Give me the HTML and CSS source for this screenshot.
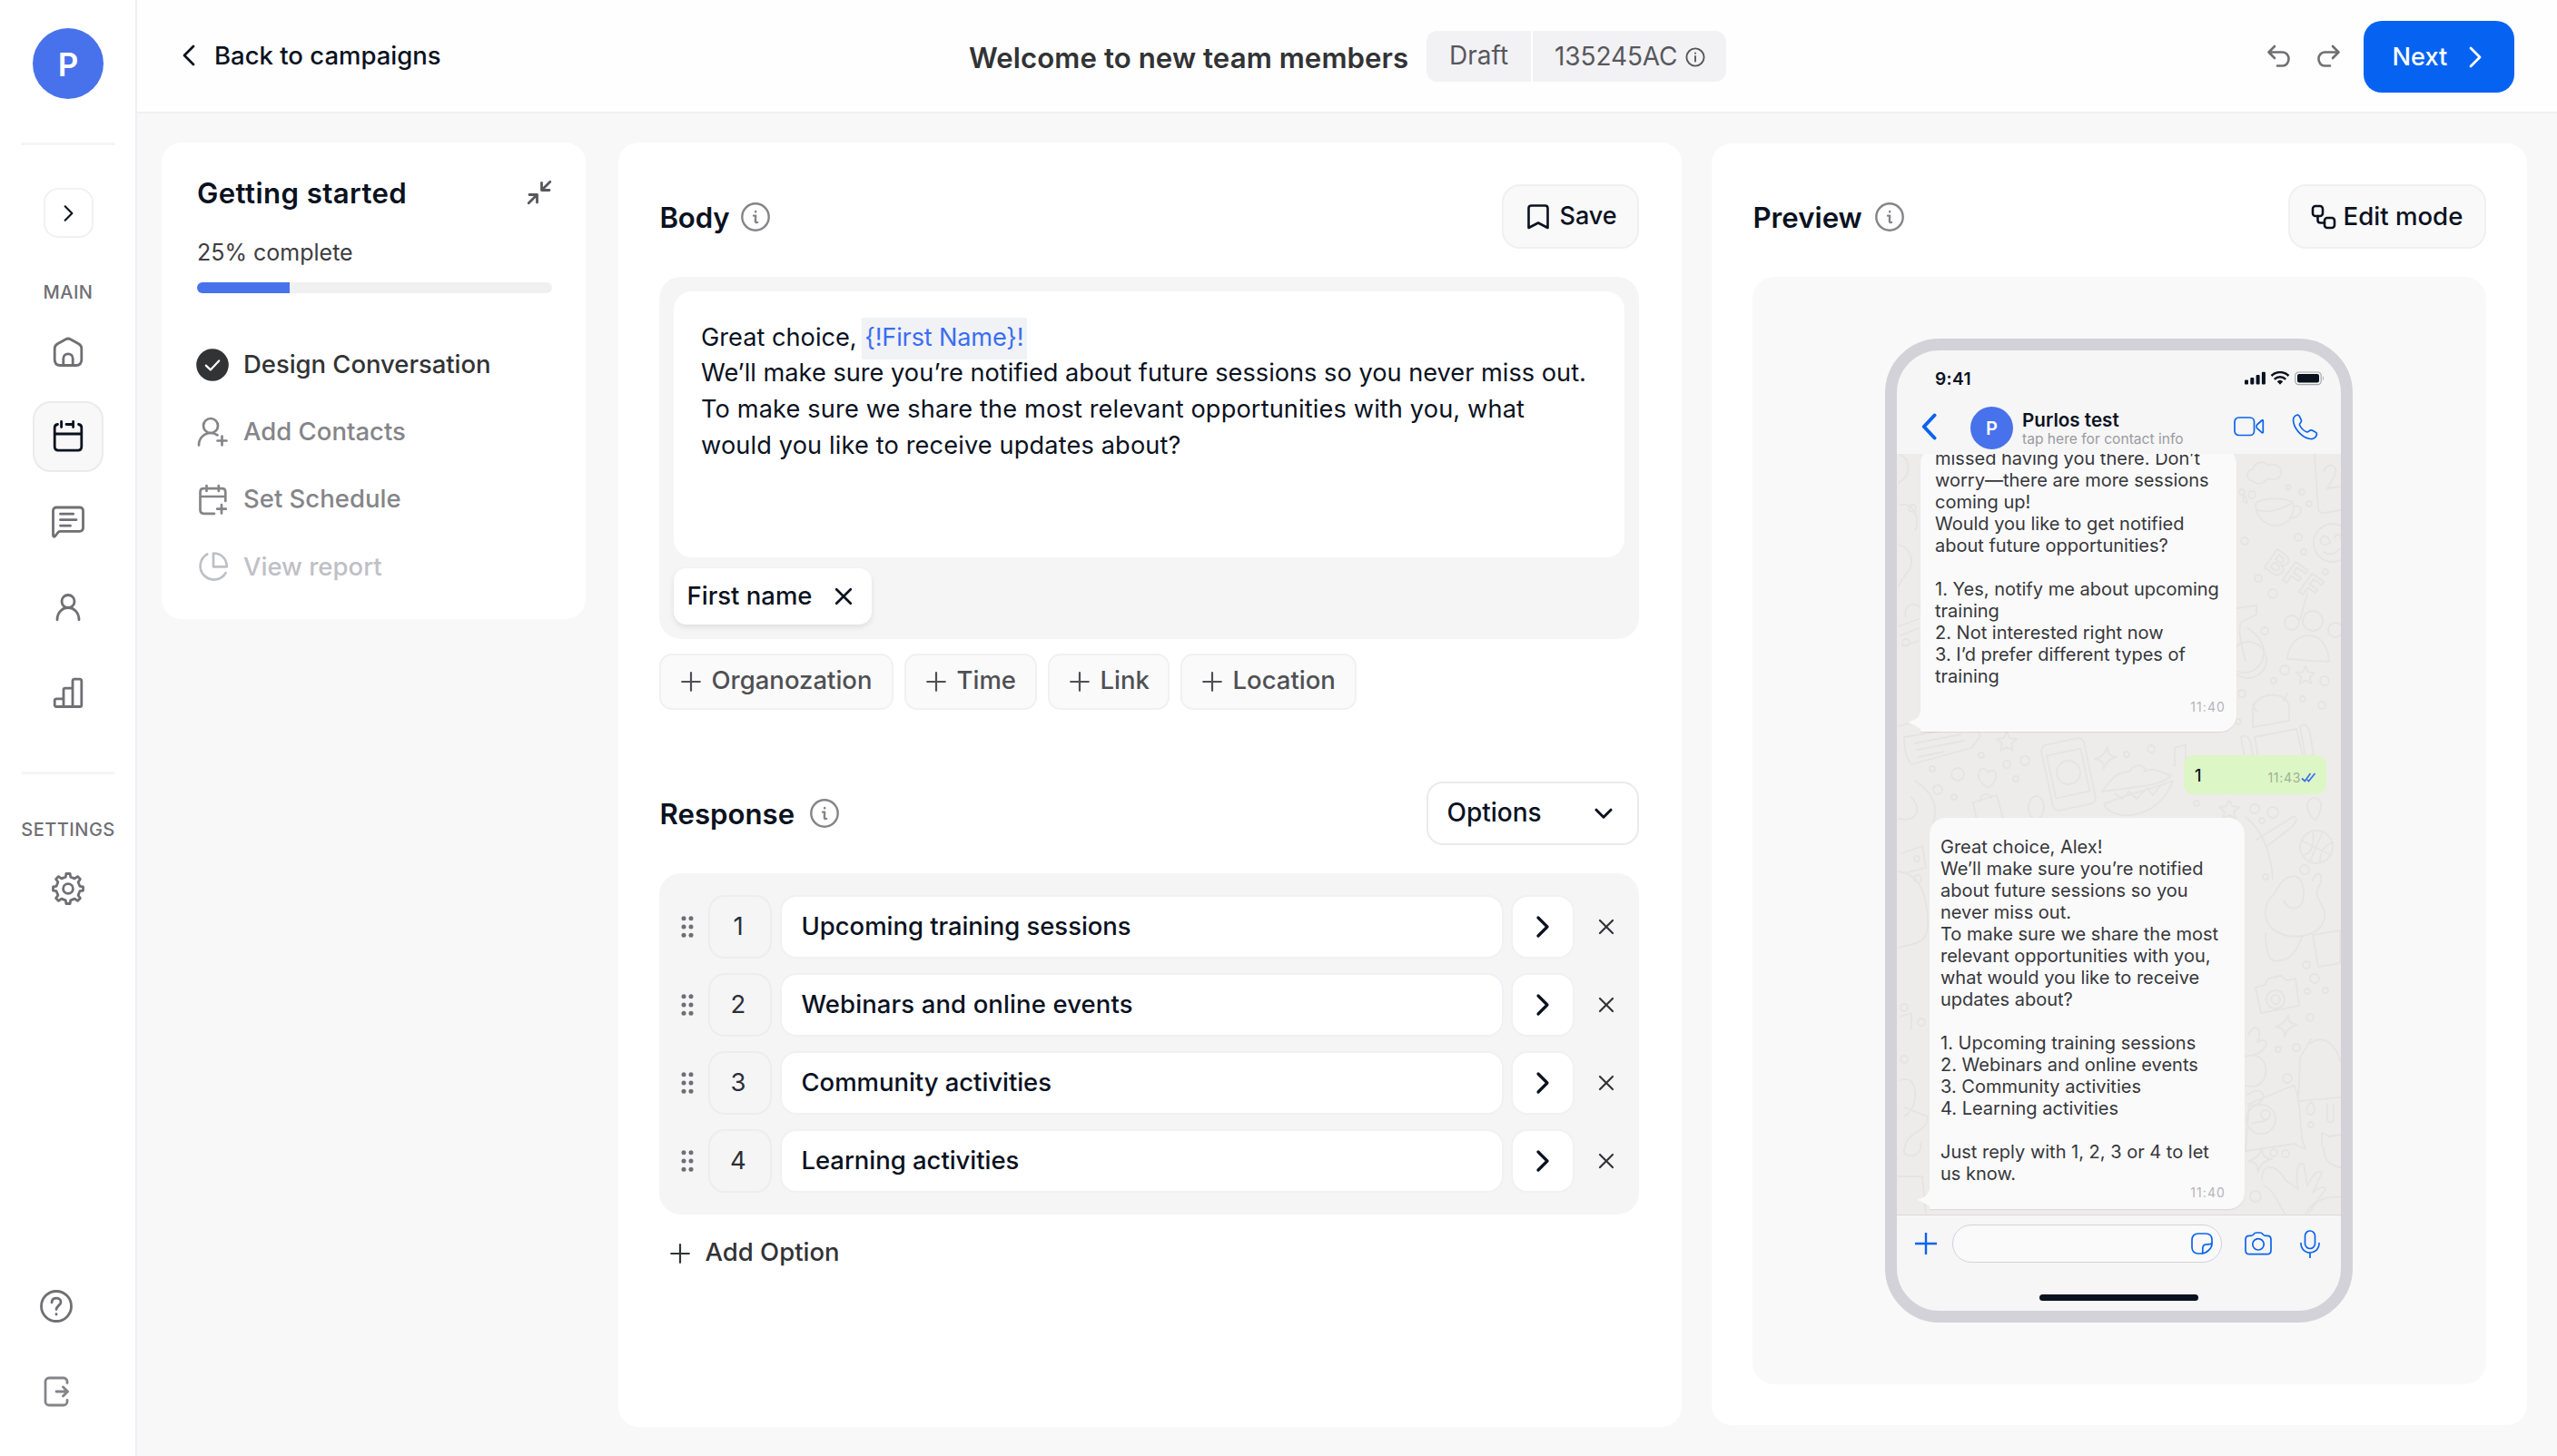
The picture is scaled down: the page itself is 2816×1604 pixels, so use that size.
FILE: index.html
```html
<!DOCTYPE html>
<html lang="en">
<head>
<meta charset="utf-8">
<title>Welcome to new team members</title>
<link rel="stylesheet" href="styles.css">
</head>
<body>
<svg class="defs" width="0" height="0" aria-hidden="true">
  <symbol id="chev-r" viewBox="0 0 16 26"><path d="M3 3l10 10L3 23"/></symbol>
  <symbol id="chev-l" viewBox="0 0 16 26"><path d="M13 3L3 13l10 10"/></symbol>
  <symbol id="plus" viewBox="0 0 22 22"><path d="M11 1.2v19.6M1.2 11h19.6"/></symbol>
  <symbol id="cross" viewBox="0 0 20 20"><path d="M2.2 2.2l15.6 15.6M17.8 2.2L2.2 17.8"/></symbol>
  <symbol id="info" viewBox="0 0 32 32"><circle cx="16" cy="16" r="14.7"/><path d="M14 14.6h2.2l-.3 6.2c0 1 .7 1.3 2.2 1.1M16.2 10v.4"/></symbol>
  <symbol id="grip" viewBox="0 0 14 24"><g fill="#6f6f73" stroke="none"><circle cx="3" cy="2.8" r="2.5"/><circle cx="11" cy="2.8" r="2.5"/><circle cx="3" cy="12" r="2.5"/><circle cx="11" cy="12" r="2.5"/><circle cx="3" cy="21.2" r="2.5"/><circle cx="11" cy="21.2" r="2.5"/></g></symbol>
  <symbol id="star" viewBox="-12 -12 24 24"><path d="M0-10l3 6.4 7 .8-5.200 4.800L6.200 9 0 5.500-6.200 9l1.400-7L-10-2.800l7-.8z"/></symbol>
  <symbol id="spark" viewBox="-12 -12 24 24"><path d="M2-11C2-4 4-2 11-1 4 1 1 3-2 11-2 4-4 2-11 1-4-1-1-4 2-11z"/></symbol>
</svg>

<div class="app">
  <nav class="sidebar">
    <div class="logo">P</div>
    <hr class="rule">
    <button class="expand"><svg class="ic" width="13" height="20" stroke-width="3.200"><use href="#chev-r"/></svg></button>
    <div class="nav-label">MAIN</div>
    <div class="nav">
      <a class="nav-item"><svg class="ic" width="40" height="40" viewBox="0 0 40 40"><path d="M20 5c1 0 1.800.3 2.600.8l9 5c2.100 1.200 3.200 3 3.200 5.300V28c0 4-2.200 6.500-6 6.500H11.200c-3.800 0-6-2.500-6-6.500V16.100c0-2.300 1.100-4.100 3.200-5.300l9-5C18.200 5.300 19 5 20 5z"/><path d="M14.800 34v-7a5.200 5.200 0 0 1 10.400 0v7"/></svg></a>
      <a class="nav-item active"><svg class="ic" width="40" height="40" viewBox="0 0 40 40"><path d="M5.200 17h29.600M8.500 6.500C6.300 6.800 5.200 8 5.200 10v21c0 2.800 1.400 4.200 4.200 4.200h21.200c2.800 0 4.200-1.400 4.200-4.200V10c0-2-1.100-3.200-3.300-3.500M12.600 3.400v6.200M25.600 3.400v6.200M18 6.500h7"/></svg></a>
      <a class="nav-item"><svg class="ic" width="40" height="40" viewBox="0 0 40 40"><path d="M3.500 34.500V7.500a3.500 3.500 0 0 1 3.500-3.500h26A3.500 3.500 0 0 1 36.500 7.500v19.300A3.500 3.500 0 0 1 33 30.300H11.500c-1 0-1.700.3-2.400 1L5.600 35.700c-1 1-2.100.4-2.100-1.200zM11.500 11.200h14.200M11.500 17.700h17.500M11.500 24.200h11"/></svg></a>
      <a class="nav-item"><svg class="ic" width="40" height="40" viewBox="0 0 40 40"><circle cx="20" cy="13.500" r="7"/><path d="M8 33.800c0-7.500 5-13.300 12-13.300s12 5.800 12 13.300"/></svg></a>
      <a class="nav-item"><svg class="ic" width="40" height="40" viewBox="0 0 40 40"><path d="M15 35.500H7A1.800 1.800 0 0 1 5.200 33.700v-5A1.800 1.800 0 0 1 7 26.900h8M15 35.500V17a1.800 1.800 0 0 1 1.800-1.800H25M25 35.500V7a1.800 1.800 0 0 1 1.800-1.800H33A1.800 1.800 0 0 1 34.800 7v26.700a1.800 1.800 0 0 1-1.800 1.800H15"/></svg></a>
    </div>
    <hr class="rule rule-2">
    <div class="nav-label settings">SETTINGS</div>
    <a class="nav-item"><svg class="ic" width="40" height="40" viewBox="0 0 40 40"><path d="M17.900 3.500h4.200l.6 3.600 4.500 1.800 3.300-2.300 2.900 2.900-2.300 3.300 1.800 4.500 3.600.6v4.200l-3.600.6-1.800 4.500 2.300 3.300-2.900 2.900-3.300-2.300-4.500 1.800-.6 3.600h-4.200l-.6-3.600-4.500-1.800-3.300 2.300-2.900-2.900 2.300-3.300-1.800-4.500-3.600-.6v-4.200l3.600-.6 1.800-4.500-2.300-3.300 2.900-2.900 3.300 2.300 4.500-1.800z"/><circle cx="20" cy="20" r="5.400"/></svg></a>
    <div class="nav nav-foot">
      <a class="nav-item"><svg class="ic" width="40" height="40" viewBox="0 0 40 40"><circle cx="20" cy="20" r="16.500"/><path d="M15 15.800c.2-2.900 2.200-4.600 5.100-4.600 2.800 0 4.900 1.700 4.900 4.200 0 3.700-5 4.300-5 8.200M20 28.600v.5"/></svg></a>
      <a class="nav-item"><svg class="ic light" width="40" height="40" viewBox="0 0 40 40"><path d="M32 10.500V9a4 4 0 0 0-4-4H12a4 4 0 0 0-4 4v22a4 4 0 0 0 4 4h16a4 4 0 0 0 4-4v-1.500M20 20h12.500M27.500 15l5 5-5 5"/></svg></a>
    </div>
  </nav>

  <div class="main">
    <header class="topbar">
      <a class="back"><svg class="ic" width="16" height="26" stroke-width="3"><use href="#chev-l"/></svg>Back to campaigns</a>
      <h1 class="title">Welcome to new team members</h1>
      <div class="badge"><span class="badge-a">Draft</span><span class="badge-b">135245AC <svg class="ic" width="22" height="22" viewBox="0 0 22 22"><circle cx="11" cy="11" r="9.600"/><path d="M11 10v5.500M11 6.500v.3"/></svg></span></div>
      <div class="history">
        <svg class="ic" width="28" height="28" viewBox="0 0 28 28"><path d="M9 3L2.500 9.500 9 16M3 9.500h15a6.500 7.500 0 0 1 0 15h-6"/></svg>
        <svg class="ic" width="28" height="28" viewBox="0 0 28 28"><path d="M19 3l6.500 6.500L19 16M25 9.500H10a6.500 7.500 0 0 0 0 15h6"/></svg>
      </div>
      <button class="next">Next<svg class="ic" width="16" height="26" stroke-width="2.600"><use href="#chev-r"/></svg></button>
    </header>

    <div class="columns">
      <section class="card started">
        <div class="started-head"><h2>Getting started</h2>
          <svg class="ic" width="28" height="28" viewBox="0 0 28 28" stroke-width="3"><path d="M25.800 2.200L17 11M16.500 3.500v8h8.500M2.200 25.800L11 17M3 16.500h8.500v8.500"/></svg></div>
        <div class="pct">25% complete</div>
        <div class="bar"><div class="fill"></div></div>
        <ul class="steps">
          <li class="done"><svg class="ic" width="36" height="36" viewBox="0 0 36 36"><circle cx="18" cy="18" r="17.800" fill="#323335" stroke="none"/><path d="M10.800 18.600l5 4.800 9.400-10" stroke="#fff" stroke-width="2.200"/></svg>Design Conversation</li>
          <li><svg class="ic" width="36" height="36" viewBox="0 0 36 36"><circle cx="16" cy="11" r="8"/><path d="M3 32.500c0-7.500 5.500-13.500 13-13.500 3 0 5.500.8 7.500 2.300M28.500 22.500v10M23.500 27.500h10"/></svg>Add Contacts</li>
          <li><svg class="ic" width="36" height="36" viewBox="0 0 36 36"><path d="M4.500 15h27.800M32.300 20V10c0-2.500-1.300-3.800-3.800-3.800H8.300C5.800 6.200 4.500 7.500 4.500 10v20c0 2.500 1.300 3.800 3.800 3.800H20M11.500 3v6M24.800 3v6M28 24v9.500M23.200 28.700h9.600"/></svg>Set Schedule</li>
          <li class="off"><svg class="ic" width="36" height="36" viewBox="0 0 36 36"><path d="M12.200 3.500A15 15 0 1 0 32.500 24.200M19 2.500v14.800h14.800C33.800 8.500 27.500 2.500 19 2.500z"/></svg>View report</li>
        </ul>
      </section>

      <section class="card editor">
        <div class="sec-head"><h2 class="h-body">Body</h2><svg class="ic info" width="32" height="32"><use href="#info"/></svg>
          <button class="btn save"><svg class="ic" width="24" height="28" viewBox="0 0 24 28"><path d="M1.500 26V4.500C1.500 2.500 2.500 1.500 4.500 1.500h15c2 0 3 1 3 3V26L12 20.500z"/></svg>Save</button></div>
        <div class="message">
          <div class="text">Great choice, <span class="token">{!First Name}!</span><br>We’ll make sure you’re notified about future sessions so you never miss out.<br><span class="loose">To make sure we share the most relevant opportunities with you, what<br>would you like to receive updates about?</span></div>
          <span class="chip">First name<svg class="ic" width="20" height="20"><use href="#cross"/></svg></span>
        </div>
        <div class="tags">
          <button class="tag t1"><svg class="ic" width="22" height="22"><use href="#plus"/></svg>Organozation</button>
          <button class="tag t2"><svg class="ic" width="22" height="22"><use href="#plus"/></svg>Time</button>
          <button class="tag t3"><svg class="ic" width="22" height="22"><use href="#plus"/></svg>Link</button>
          <button class="tag t4"><svg class="ic" width="22" height="22"><use href="#plus"/></svg>Location</button>
        </div>

        <div class="sec-head resp"><h2>Response</h2><svg class="ic info" width="32" height="32"><use href="#info"/></svg>
          <button class="select">Options<svg class="ic" width="20" height="13" viewBox="0 0 20 13"><path d="M2 2.200l8 8 8-8"/></svg></button></div>
        <div class="options">
          <div class="row"><svg class="grip" width="14" height="24"><use href="#grip"/></svg><span class="num">1</span><span class="field">Upcoming training sessions</span><button class="go"><svg class="ic" width="16" height="26"><use href="#chev-r"/></svg></button><svg class="ic del" width="18" height="18"><use href="#cross"/></svg></div>
          <div class="row"><svg class="grip" width="14" height="24"><use href="#grip"/></svg><span class="num">2</span><span class="field loose">Webinars and online events</span><button class="go"><svg class="ic" width="16" height="26"><use href="#chev-r"/></svg></button><svg class="ic del" width="18" height="18"><use href="#cross"/></svg></div>
          <div class="row"><svg class="grip" width="14" height="24"><use href="#grip"/></svg><span class="num">3</span><span class="field">Community activities</span><button class="go"><svg class="ic" width="16" height="26"><use href="#chev-r"/></svg></button><svg class="ic del" width="18" height="18"><use href="#cross"/></svg></div>
          <div class="row"><svg class="grip" width="14" height="24"><use href="#grip"/></svg><span class="num">4</span><span class="field">Learning activities</span><button class="go"><svg class="ic" width="16" height="26"><use href="#chev-r"/></svg></button><svg class="ic del" width="18" height="18"><use href="#cross"/></svg></div>
        </div>
        <button class="add"><svg class="ic" width="22" height="22"><use href="#plus"/></svg>Add Option</button>
      </section>

      <section class="card preview">
        <div class="sec-head"><h2>Preview</h2><svg class="ic info" width="32" height="32"><use href="#info"/></svg>
          <button class="btn edit"><svg class="ic" width="28" height="28" viewBox="0 0 28 28"><rect x="2" y="2" width="11" height="11" rx="3"/><rect x="15" y="15" width="11" height="11" rx="3"/><path d="M7.500 13v4.500c0 2 1 3 3 3H15"/></svg>Edit mode</button></div>
        <div class="stage">
          <div class="phone">
            <div class="status"><span>9:41</span>
              <svg width="88" height="16" viewBox="0 0 88 16"><g fill="#0b121f"><rect x="0" y="9.500" width="4" height="5" rx="1"/><rect x="6.300" y="7" width="4" height="7.500" rx="1"/><rect x="12.600" y="4" width="4" height="10.500" rx="1"/><rect x="18.900" y=".8" width="4" height="13.700" rx="1"/><rect x="58" y="3" width="24" height="9.600" rx="2"/></g><g fill="none" stroke="#0b121f" stroke-width="2.500"><path d="M29.500 5a13.500 13.500 0 0 1 19 0M32.800 8.800a8.800 8.800 0 0 1 12.400 0"/></g><path d="M39 14.800l3.300-3.500a4.800 4.800 0 0 0-6.600 0z" fill="#0b121f"/><rect x="55.800" y="1" width="28.400" height="13.600" rx="3.600" fill="none" stroke="#a5a6ab" stroke-width="1.200"/><path d="M86 5.500c1.300.5 1.300 4.200 0 4.700z" fill="#a5a6ab"/></svg></div>
            <div class="contact">
              <svg class="ic blue" width="18" height="30" viewBox="0 0 18 30"><path d="M14.500 2.500L2.800 15l11.700 12.500" stroke-width="4"/></svg>
              <div class="avatar">P</div>
              <div class="who"><b>Purlos test</b><span>tap here for contact info</span></div>
              <svg class="ic blue video" width="34" height="22" viewBox="0 0 34 22"><rect x="1" y="1" width="21.500" height="19.500" rx="4.500"/><path d="M25.500 9l5.600-5c.6-.5 1.200-.2 1.200.5v12.600c0 .7-.6 1-1.200.5l-5.600-5c-.6-.6-.6-3 0-3.600z"/></svg>
              <svg class="ic blue call" width="29" height="29" viewBox="0 0 29 29"><path d="M5.500 1.200c1.300-.4 2.300.2 3 1.600l1.700 3.600c.6 1.200.3 2.200-.6 3.200-.9 1-1.500 1.600-.9 2.900 1.200 2.700 4.500 6 7.400 7.300 1.300.6 2-.1 2.900-1 1-1 2-1.300 3.200-.7l3.700 2c1.400.7 1.900 1.800 1.300 3.200-1 2.800-3.500 4.500-6.500 4.200C11 26.500 1.800 15.500 1.500 7c0-2.800 1.600-5 4-5.800z"/></svg>
            </div>
            <div class="chat">
              <svg class="doodles" width="489" height="839" viewBox="0 0 489 839">
                <path d="M392 30c-8-2-8-12 0-13 2-8 12-10 17-4 8-4 16 2 14 9-2 8-10 6-14 5-5 6-12 8-17 3zM395 55c0 28 38 34 42 5l-1-7c-14-6-36-4-41 2zM398 62c12 4 28-2 38-8M437 58c10-4 12 10-2 13M460 0l4 60c0 4 3 6 7 5l18-3M470 20c3-12 18-8 12 4l-8 14 14-2M383 45l3 8c-3 3-7-2-3-8z"/>
                <circle cx="480" cy="98" r="21"/><path d="M466 95c4-8 10-4 11 3-6 4-10 2-11-3zM482 92c3-6 7-3 7 1M470 108c6 4 12 3 17-3"/>
                <text x="403" y="124" transform="rotate(35 403 124)">BFF</text>
                <path d="M374 170l22-3v10l-14 7c-8 2-4 22 2 44M444 182l8-28M430 226c2-32 44-38 46 3zM376 240c24 8 44-28 10-48"/>
                <circle cx="435" cy="186" r="8"/><circle cx="458" cy="184" r="11"/><circle cx="483" cy="194" r="8"/><circle cx="387" cy="227" r="20"/>
                <path d="M392 282c0-18 36-24 40-4v16l-40 7zM396 284l-4-8M426 272l4-8M394 312l46-9 8 34-48 8zM379 312c6-4 10 2 11 8l4 24-9 2zM444 300c6-4 10 2 11 8l4 24-9 2z"/>
                <path d="M8 312l78-13 6 12-10 13-66 18c-7-8-8-20-8-30zM20 319l50-10M22 326l52-10M24 334l28-6"/>
                <rect x="165" y="316" width="48" height="74" rx="7" transform="rotate(-12 189 353)"/><rect x="170" y="328" width="38" height="48" transform="rotate(-12 189 353)"/><circle cx="189" cy="351" r="13"/>
                <path d="M226 372c8-10 14-22 30-22 10-14 22-2 16 0 12-6 20 2 30 4-6 12-50 14-76 18zM228 386c10 20 60 18 76-26-24 10-50 14-76 26zM240 374l8 6 8-8 8 8 12-12 6 8 8-10M306 344v-20l12-4v18M90 352c2-8 8-6 10-1 4-4 10-2 9 4 0 8-6 11-9 13-7-5-12-10-10-16zM84 384l26-8 8 30-28 8zM92 382c0-8 10-10 12-3M145 390c0-16 16-18 17-2 0 18-16 20-17 2zM452 388c0-12 16-12 15 0 0 8-4 12-6 16-5-4-9-10-9-16z"/>
                <circle cx="462" cy="433" r="18"/><path d="M446 426l32 16M455 449l14-33M448 442c10-2 12-16 10-26M466 450c0-12 4-18 14-22"/>
                <path d="M396 425l40-25c6-2 4 6 0 10l-28 22M384 400c20 16 28 40 30 68M418 480c10-18 28-22 30 2s-18 22-22 10M458 470c6-16 14-4 6 8-8 14 18 22 2 44-20 18-60 10-60-16 0-20 12-18 12-26M406 528c0 24 6 34 16 30 12 0 20-14 24-26M458 530l30-5v36l-24 4z"/>
                <path d="M395 588l10-3 4-7 14-3 6 5 10-2 4 30-42 8z"/><circle cx="417" cy="601" r="10"/><circle cx="417" cy="601" r="5"/>
                <path d="M387 640c10-18 16 0 10 8 16-8 12 10-4 14M384 664c30-10 30 40 0 32M455 650c14-12 28 0 34 20M444 665l12-20M444 665l-2 48 46-4M474 716v16c0 6 7 6 7 0v-16M386 706c20-14 24 10 4 12l-4-2M388 716l48-20c6 0 8 30 10 58l4 12-12-6-54 8z"/>
                <circle cx="401" cy="733" r="16"/><circle cx="406" cy="728" r="5"/><path d="M391 738c6-4 14 0 18-6M456 714c6 6 4 14 0 14s-8-6 0-14zM468 762l0-14 8 4 12-2M470 764c0 16 8 20 19 22M402 800c0-18 14-20 26 0l14 10c-4-20 0-30 6-28l4 24c6-12 12-18 16-14l-10 22c6-6 14-8 14-4l-18 26M404 806c10 4 14 16 24 32M450 839c4-16 26-22 38-20"/>
                <path d="M2 0c14 6 14 24 0 32M4 56c16-4 22 20 16 28M2 100c14 4 18 20 10 30s-10 16-10 16M2 190l22-8M4 200l20-8M6 212l18-6M10 180c-4-14 10-18 16-10M2 300l20-6M2 402c20 4 26-10 14-24M20 360c20 14 26 30 20 46M6 440l22-8 4 24-24 6M2 460c20 2 30 20 32 50s-10 28-32 34M4 620l12-4v18M4 690c20-8 22 30 4 40M8 720l26 10c0 20-26 14-26 40 8 8 20 0 18-10M2 796h26l4 40"/>
                <use href="#star" x="108" y="304" width="26" height="26"/><use href="#star" x="438" y="232" width="24" height="24"/><use href="#star" x="353" y="379" width="26" height="26"/><use href="#spark" x="217" y="322" width="26" height="26"/><use href="#spark" x="416" y="617" width="26" height="26"/><use href="#spark" x="386" y="764" width="28" height="28"/>
                <circle cx="380" cy="42" r="3"/><circle cx="391" cy="45" r="4"/><circle cx="446" cy="42" r="3"/><circle cx="454" cy="55" r="3"/><circle cx="431" cy="37" r="2.500"/><circle cx="442" cy="92" r="4"/><circle cx="383" cy="96" r="4"/><circle cx="448" cy="108" r="3"/><circle cx="398" cy="137" r="4"/><circle cx="414" cy="154" r="5"/><circle cx="472" cy="130" r="3"/><circle cx="405" cy="195" r="4"/><circle cx="427" cy="238" r="5"/><circle cx="415" cy="250" r="3"/><circle cx="471" cy="250" r="5"/><circle cx="380" cy="264" r="4"/><circle cx="447" cy="270" r="3"/><circle cx="468" cy="277" r="4"/><circle cx="376" cy="295" r="3"/><circle cx="93" cy="332" r="3"/><circle cx="121" cy="342" r="4"/><circle cx="141" cy="338" r="5"/><circle cx="67" cy="353" r="7"/><circle cx="45" cy="370" r="5"/><circle cx="63" cy="378" r="3"/><circle cx="131" cy="358" r="3"/><circle cx="280" cy="325" r="4"/><circle cx="253" cy="331" r="3"/><circle cx="39" cy="347" r="3"/><circle cx="394" cy="391" r="5"/><circle cx="414" cy="395" r="6"/><circle cx="402" cy="404" r="3"/><circle cx="330" cy="385" r="3"/><circle cx="23" cy="468" r="4"/><circle cx="22" cy="446" r="3"/><circle cx="449" cy="458" r="5"/><circle cx="406" cy="466" r="3"/><circle cx="451" cy="563" r="4"/><circle cx="460" cy="578" r="5"/><circle cx="452" cy="592" r="3"/><circle cx="472" cy="591" r="3"/><circle cx="455" cy="621" r="4"/><circle cx="420" cy="656" r="3"/><circle cx="440" cy="654" r="4"/><circle cx="430" cy="688" r="5"/><circle cx="8" cy="610" r="4"/><circle cx="27" cy="626" r="4"/><circle cx="8" cy="667" r="4"/><circle cx="17" cy="60" r="4"/><circle cx="10" cy="208" r="4"/><circle cx="415" cy="770" r="4"/><circle cx="428" cy="771" r="4"/><circle cx="395" cy="818" r="6"/><circle cx="456" cy="739" r="3"/>
              </svg>
              <div class="bubble in b1">missed having you there. Don’t
worry—there are more sessions
coming up!
Would you like to get notified
about future opportunities?

1. Yes, notify me about upcoming
training
2. Not interested right now
3. I’d prefer different types of
training<time>11:40</time><svg class="tail" width="40" height="27" viewBox="0 0 40 27"><path d="M13.500 0c0 9-4 14-12.500 15.800-1 .4-1 1.200 0 1.700C9 20 14 27 26 27h14V0z"/></svg></div>
              <div class="bubble out"><span>1</span><time>11:43</time><svg width="17" height="11" viewBox="0 0 17 11"><path d="M1 6.500l3.300 3L10.500 1M6.800 8l1.800 1.500L15.500 1"/></svg><svg class="tail-out" width="16" height="20" viewBox="0 0 16 20"><path d="M0 0h10c0 9 1 12 5 13.500C14 16.500 8 16 6 20H0z"/></svg></div>
              <div class="bubble in b2">Great choice, Alex!
We’ll make sure you’re notified
about future sessions so you
never miss out.
To make sure we share the most
relevant opportunities with you,
what would you like to receive
updates about?

1. Upcoming training sessions
2. Webinars and online events
3. Community activities
4. Learning activities

Just reply with 1, 2, 3 or 4 to let
us know.<time>11:40</time><svg class="tail" width="40" height="27" viewBox="0 0 40 27"><path d="M13.500 0c0 9-4 14-12.500 15.800-1 .4-1 1.200 0 1.700C9 20 14 27 26 27h14V0z"/></svg></div>
            </div>
            <div class="composer">
              <svg class="ic blue" width="24" height="24" viewBox="0 0 24 24"><path d="M12 .5v23M.5 12h23" stroke-width="2.400"/></svg>
              <div class="input"><svg class="ic blue" width="24" height="24" viewBox="0 0 24 24"><path d="M12 23H8c-4.500 0-7-2.500-7-7V8c0-4.500 2.500-7 7-7h8c4.500 0 7 2.500 7 7v4.500C23 17 17 23 12 23zM12.300 23c1-2 .3-4 .5-6.200.3-2.500 1.700-3.700 4-3.900 2.200-.2 4.500.4 6-1.200"/></svg></div>
              <svg class="ic blue" width="30" height="26" viewBox="0 0 30 26"><path d="M1 8.500c0-2.700 1.500-4.200 4.200-4.200h2c1.300 0 2-.6 2.700-1.500C10.800 1.500 11.700 1 13 1h4c1.300 0 2.200.5 3.100 1.800.7.900 1.400 1.500 2.700 1.500h2c2.700 0 4.200 1.500 4.200 4.200V20.500c0 2.700-1.500 4.200-4.200 4.200H5.200C2.500 24.700 1 23.200 1 20.500z"/><circle cx="15" cy="13.800" r="6.200"/></svg>
              <svg class="ic blue mic" width="22" height="31" viewBox="0 0 22 31"><rect x="5.500" y="1" width="11" height="19.500" rx="5.500"/><path d="M1 14.500c0 14 20 14 20 0M11 25v5.500"/></svg>
            </div>
            <div class="home"></div>
          </div>
        </div>
      </section>
    </div>
  </div>
</div>
</body>
</html>
```
FILE: styles.css
```css
* { box-sizing: border-box; margin: 0; padding: 0; }
body { width: 2816px; height: 1604px; overflow: hidden; background: #f8f8f8; color: #0b121f; font-family: Inter, "Liberation Sans", sans-serif; font-size: 27.5px; font-weight: 500; }
button { font: inherit; color: inherit; border: 0; background: none; }
ul { list-style: none; }
h1, h2 { font-size: 31.2px; font-weight: 600; line-height: 40px; white-space: nowrap; }
.defs { position: absolute; }
.ic { fill: none; stroke: currentColor; stroke-width: 2.8; stroke-linecap: round; stroke-linejoin: round; flex: none; display: block; }
.app { display: flex; height: 1604px; }

/* sidebar */
.sidebar { width: 151px; flex: none; background: #fff; border-right: 2px solid #efeff4; padding: 31px 0 32px 1px; display: flex; flex-direction: column; align-items: center; color: #6f6f74; }
.logo { width: 78px; height: 78px; border-radius: 50%; background: #4872eb; color: #fff; font-size: 35px; font-weight: 600; line-height: 80px; text-align: center; }
.rule { width: 104px; height: 3px; border: 0; border-radius: 2px; background: #f5f5f6; margin: 48px 0 47px; }
.expand { width: 55px; height: 55px; border: 2px solid #f1f1f3; border-radius: 16px; color: #0b121f; display: flex; align-items: center; justify-content: center; margin-bottom: 48px; }
.nav-label { font-size: 20px; line-height: 24px; letter-spacing: .5px; margin-bottom: 14.5px; }
.nav { display: flex; flex-direction: column; gap: 15.8px; }
.nav-item { width: 78px; height: 78px; display: flex; align-items: center; justify-content: center; border-radius: 20px; }
.nav-item.active { background: #f8f8f8; border: 2px solid #ebebec; color: #0b121f; }
.rule-2 { margin: 48px 0 49px; }
.settings { margin-bottom: 14px; }
.nav-foot { margin-top: auto; margin-right: 26px; }
.light { color: #858589; }

/* top bar */
.main { flex: 1; display: flex; flex-direction: column; }
.topbar { height: 125px; background: #fefefe; border-bottom: 2px solid #f0f0f3; display: flex; align-items: center; padding: 0 48px 0 49px; }
.back { display: flex; align-items: center; gap: 20px; width: 867px; margin-top: -1px; }
.title { color: #323335; margin-top: 4px; width: 504px; letter-spacing: .07px; }
.badge { display: flex; height: 56px; margin-top: 1px; color: #57585c; font-size: 28px; font-weight: 400; line-height: 54px; }
.badge-a { width: 115px; padding-left: 25px; background: #f2f2f5; border-radius: 12px 0 0 12px; }
.badge-b { width: 213px; margin-left: 2px; padding-left: 24px; background: #f2f2f5; border-radius: 0 12px 12px 0; display: flex; align-items: center; gap: 9px; letter-spacing: -.1px; }
.badge .ic { stroke-width: 1.9; margin-top: 1px; }
.history { display: flex; gap: 26px; margin-left: auto; margin-right: 25px; color: #6f6f74; margin-top: 1px; }
.history .ic { stroke-width: 2.6; }
.next { width: 166px; height: 79px; margin-top: 2px; border-radius: 20px; background: #0663f2; color: #fff; display: flex; align-items: center; justify-content: space-between; padding: 0 35px 0 32px; font-size: 27.2px; }

/* columns */
.columns { flex: 1; display: flex; align-items: flex-start; padding: 32px 34px 0 27px; }
.card { background: #fff; border-radius: 22px; }
.started { width: 467px; height: 525px; padding: 36px 37px 0 39px; margin-right: 35.5px; }
.started h2 { letter-spacing: .4px; }
.started-head { display: flex; justify-content: space-between; align-items: center; color: #0b121f; }
.started-head .ic { color: #57585c; margin-top: -2px; }
.pct { font-size: 25px; font-weight: 400; color: #3c3d40; line-height: 36px; margin-top: 27px; }
.bar { height: 12px; border-radius: 6px; background: #f0f0f1; overflow: hidden; margin-top: 14.5px; }
.fill { width: 102px; height: 12px; background: #4872eb; }
.steps { margin-top: 42px; }
.steps li { height: 74.3px; display: flex; align-items: center; gap: 16px; color: #858589; padding-bottom: 2px; }
.steps .ic { stroke-width: 2.7; margin: 2px 0 0 -1px; }
.steps .done { color: #323335; letter-spacing: -.05px; }
.steps .off { color: #bfc0c6; }

.editor { width: 1171px; height: 1415px; padding: 46px 47px 0 45px; margin-right: 33px; }
.sec-head { height: 71px; display: flex; align-items: center; }
.sec-head h2 { margin: 2px 0 0 1px; }
.info { color: #858589; stroke-width: 2.4; margin-left: 17px; }
.h-body { letter-spacing: -.2px; }
.h-body + .info { margin-left: 13px; }
.btn { height: 71px; margin-left: auto; background: #f9f9f9; border: 2px solid #f0f0f2; border-radius: 20px; display: flex; align-items: center; padding: 0 0 2px; }
.btn .ic { stroke-width: 2.6; margin-top: 3px; }
.save { width: 151px; padding-left: 26px; gap: 12px; font-size: 27px; }
.edit { width: 218px; padding-left: 23px; gap: 8px; font-size: 27.6px; }
.message { height: 399px; margin-top: 31px; background: #f5f5f6; border-radius: 24px; padding: 16px 16px 0; }
.text { height: 293px; background: #fff; border-radius: 20px; padding: 30.5px 30.5px; font-size: 27.2px; font-weight: 400; line-height: 39.9px; white-space: nowrap; }
.token { color: #3b6ef0; background: #f1f2f6; padding: 5px 4px 8px 3px; margin: 0 0 0 -2px; letter-spacing: -.2px; }
.text .loose { letter-spacing: .13px; }
.chip { display: inline-flex; align-items: center; width: 218px; height: 62px; margin-top: 12px; background: #fff; border-radius: 14px; box-shadow: 0 3px 6px rgba(0, 0, 0, .09); padding: 0 0 2px 15px; gap: 24px; line-height: 60px; }
.chip .ic { stroke-width: 2.7; margin-top: 2px; }
.tags { display: flex; gap: 12px; margin-top: 15.5px; }
.tag { height: 62px; border: 2px solid #f1f1f4; border-radius: 14px; background: #fafafa; color: #4f5054; display: flex; align-items: center; padding: 0 0 3px 22px; gap: 12px; }
.tag .ic, .add .ic { stroke-width: 2.2; margin-top: 3px; }
.t1 { width: 258px; } .t2 { width: 146px; } .t3 { width: 134px; } .t4 { width: 194px; }

.resp { margin-top: 78.5px; }
.select { width: 234px; height: 70px; margin-left: auto; border: 2px solid #ebebec; border-radius: 18px; display: flex; align-items: center; justify-content: space-between; padding: 0 27px 2px 21px; font-size: 28px; background: #fff; }
.select .ic { stroke-width: 3; margin-top: 3px; }
.options { margin-top: 31px; height: 376px; background: #f5f5f6; border-radius: 24px; padding: 23.5px 27px 0 24px; display: flex; flex-direction: column; gap: 16px; }
.row { display: flex; align-items: center; height: 70px; }
.num { width: 70px; height: 70px; margin-left: 16px; border: 2px solid #ededee; border-radius: 18px; text-align: center; line-height: 65px; font-weight: 400; color: #2b2f38; padding-right: 3px; }
.field { width: 797px; height: 70px; margin-left: 9px; background: #fff; border: 2px solid #f1f1f4; border-radius: 18px; line-height: 64px; padding-left: 22px; letter-spacing: -.05px; }
.field.loose { letter-spacing: .11px; }
.go { width: 70px; height: 70px; margin-left: 8px; background: #fff; border: 2px solid #f1f1f4; border-radius: 18px; display: flex; align-items: center; justify-content: center; }
.go .ic { stroke-width: 3.2; }
.del { margin-left: auto; stroke-width: 2.4; color: #323335; }
.grip { display: block; }
.add { display: flex; align-items: center; gap: 17px; margin: 19px 0 0 12px; height: 44px; color: #323335; }

.preview { width: 898px; height: 1412px; margin-top: 1px; padding: 45px 45px 0; }
.preview .info { margin-left: 14px; }
.stage { height: 1220px; margin-top: 31px; background: #f9f9f9; border-radius: 24px; padding-top: 68px; }

/* phone */
.phone { width: 515px; height: 1084px; margin: 0 auto; border: 13px solid #d3d2d9; border-radius: 60px; background: #f6f6f6; overflow: hidden; }
.status { height: 56px; padding: 6px 18px 0 42px; display: flex; justify-content: space-between; align-items: center; font-size: 19.2px; font-weight: 600; letter-spacing: .3px; }
.contact { height: 58px; display: flex; align-items: center; padding: 0 25px 2px 27px; }
.blue { color: #0b63ee; stroke-width: 1.7; }
.avatar { width: 47px; height: 47px; margin: 3px 0 0 36px; border-radius: 50%; background: #4872eb; color: #fff; font-size: 20px; font-weight: 600; line-height: 48px; text-align: center; }
.who { margin-left: 10px; margin-top: 2px; width: 233px; white-space: nowrap; }
.who b { display: block; font-size: 20.6px; font-weight: 600; line-height: 24px; }
.who span { display: block; font-size: 15.6px; font-weight: 400; line-height: 17px; color: #9a9ba0; }
.call { margin-left: auto; }
.chat { height: 839px; background: #edecea; overflow: hidden; position: relative; display: flex; flex-direction: column; gap: 26px; border-bottom: 1px solid #dad9dd; }
.doodles { position: absolute; left: 0; top: 0; fill: none; stroke: #e5e4e1; stroke-width: 1.8; stroke-linecap: round; stroke-linejoin: round; }
.doodles text { font-size: 34px; font-weight: 700; letter-spacing: 2px; }
.bubble { flex: none; position: relative; font-size: 20px; font-weight: 400; line-height: 24px; white-space: pre; color: #36373b; }
.in { background: #fafafa; border-radius: 18px 18px 18px 0; box-shadow: 0 1px 1px rgba(0, 0, 0, .09); display: flex; flex-direction: column; z-index: 0; }
.b1 { width: 348px; height: 313px; margin: -7px 0 0 26px; padding-left: 16px; }
.b2 { width: 347px; height: 431px; margin-left: 36px; padding: 20px 0 0 12px; }
time { font-size: 14px; line-height: 20px; letter-spacing: 1.1px; color: #b4b5bb; }
.in time { align-self: flex-end; margin: 12px 12px 0 0; }
.b2 time { margin: -1px 21px 0 0; }
.tail { position: absolute; left: -13px; bottom: 0; fill: #fafafa; z-index: -1; }
.out { width: 157px; height: 43px; margin-left: 316px; background: #dcf6c5; border-radius: 10px; display: flex; align-items: center; padding: 2px 11px 0 12px; color: #0b121f; }
.out span { font-weight: 500; font-size: 18px; }
.out time { margin: 4px 0 0 auto; color: #a0b093; letter-spacing: .7px; }
.out svg { fill: none; stroke: #3b6ef0; stroke-width: 1.7; margin-top: 4px; }
.out .tail-out { position: absolute; right: -5px; bottom: 0; fill: #dcf6c5; stroke: none; margin: 0; z-index: -1; }
.composer { height: 62px; display: flex; align-items: center; padding: 0 23px 0 20px; }
.input { width: 297px; height: 42px; margin: 0 25px 0 17px; border: 1.5px solid #d3d2d9; border-radius: 21px; background: #fafafa; display: flex; align-items: center; justify-content: flex-end; padding-right: 9px; }
.mic { margin-left: auto; }
.home { width: 175px; height: 7px; border-radius: 4px; background: #0b121f; margin: 25px auto 0; }
```
